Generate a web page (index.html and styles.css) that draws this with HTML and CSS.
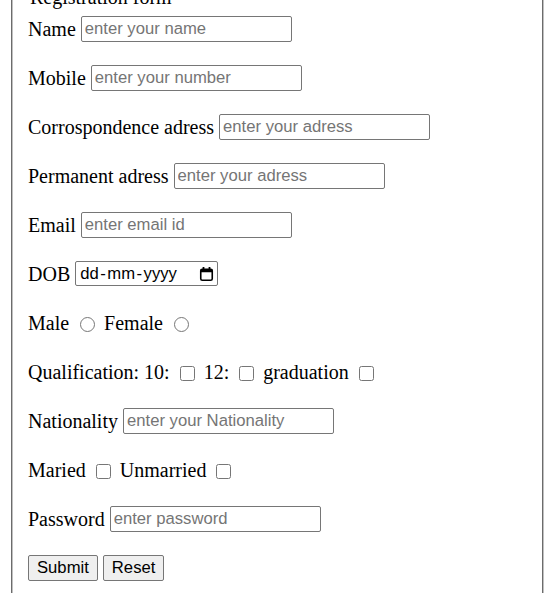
FILE: index.html
```html
<!DOCTYPE html>
<html lang="en">
<head>
<meta charset="utf-8">
<title>Registration form</title>
<link rel="stylesheet" href="styles.css">
</head>
<body>
<form class="reg-form">
  <fieldset class="reg-fieldset">
    <legend class="reg-legend">Registration form</legend>
    <div class="row">Name <input class="text-input" type="text" placeholder="enter your name"></div>
    <div class="row">Mobile <input class="text-input" type="text" placeholder="enter your number"></div>
    <div class="row">Corrospondence adress <input class="text-input" type="text" placeholder="enter your adress"></div>
    <div class="row">Permanent adress <input class="text-input" type="text" placeholder="enter your adress"></div>
    <div class="row">Email <input class="text-input" type="text" placeholder="enter email id"></div>
    <div class="row">DOB <span class="date-field"><span class="date-text">dd<span class="sep">-</span>mm<span class="sep">-</span>yyyy</span><svg class="cal-icon" width="15" height="16" viewBox="0 0 15 16"><rect x="1.75" y="3.25" width="11.5" height="11" rx="1.5" fill="none" stroke="#000" stroke-width="1.6"/><rect x="1.75" y="3.25" width="11.5" height="3" fill="#000"/><rect x="3.6" y="1" width="1.8" height="3" fill="#000"/><rect x="9.6" y="1" width="1.8" height="3" fill="#000"/></svg></span></div>
    <div class="row">Male <input class="radio" type="radio" name="g"> Female <input class="radio" type="radio" name="g"></div>
    <div class="row">Qualification: 10: <input class="check" type="checkbox"> 12: <input class="check" type="checkbox"> graduation <input class="check" type="checkbox"></div>
    <div class="row">Nationality <input class="text-input" type="text" placeholder="enter your Nationality"></div>
    <div class="row">Maried <input class="check" type="checkbox"> Unmarried <input class="check" type="checkbox"></div>
    <div class="row">Password <input class="text-input" type="password" placeholder="enter password"></div>
    <div class="row"><button class="btn" type="submit">Submit</button> <button class="btn" type="reset">Reset</button></div>
  </fieldset>
</form>
</body>
</html>
```
FILE: styles.css
```css
html, body {
  margin: 0;
  background: #fff;
}
body {
  font-family: "Liberation Serif", "Times New Roman", serif;
  font-size: 20px;
  color: #000;
}
.reg-form {
  margin: 0;
}
.reg-fieldset {
  margin: -14px 12px 0 11px;
  padding: 7px 14px 14px 15px;
  border: 2px groove #c0c0c0;
  min-width: 0;
}
.reg-legend {
  padding: 0 2px;
  line-height: 23px;
}
.row {
  height: 26px;
  line-height: 26px;
  margin-bottom: 23px;
  white-space: nowrap;
}
.text-input {
  font-family: "Liberation Sans", Arial, sans-serif;
  font-size: 16.67px;
  width: 211px;
  height: 26px;
  box-sizing: border-box;
  padding: 1px 3px;
  margin: 0;
  border: 1px solid #767676;
  border-radius: 2px;
  color: #000;
  background: #fff;
  vertical-align: top;
}
.text-input::placeholder {
  color: #757575;
}
.date-field {
  display: inline-flex;
  align-items: center;
  justify-content: space-between;
  box-sizing: border-box;
  width: 143px;
  height: 25px;
  margin-top: 0;
  padding: 0 3px 0 4px;
  border: 1px solid #767676;
  border-radius: 2px;
  font-family: "Liberation Sans", Arial, sans-serif;
  font-size: 16.67px;
  vertical-align: top;
}
.date-text {
  line-height: 22px;
}
.sep {
  padding: 0 1.5px;
}
.cal-icon {
  display: block;
}
.radio {
  width: 15px;
  height: 15px;
  margin: 0 4px 0 6px;
  vertical-align: -2px;
}
.check {
  width: 15px;
  height: 15px;
  margin: 0 4px 0 5px;
  vertical-align: -1.5px;
}
.btn {
  font-family: "Liberation Sans", Arial, sans-serif;
  font-size: 16.67px;
  height: 26px;
  padding: 0 8px;
  margin: 0;
  background: #efefef;
  border: 1px solid #767676;
  border-radius: 2px;
  color: #000;
  vertical-align: top;
}
```
